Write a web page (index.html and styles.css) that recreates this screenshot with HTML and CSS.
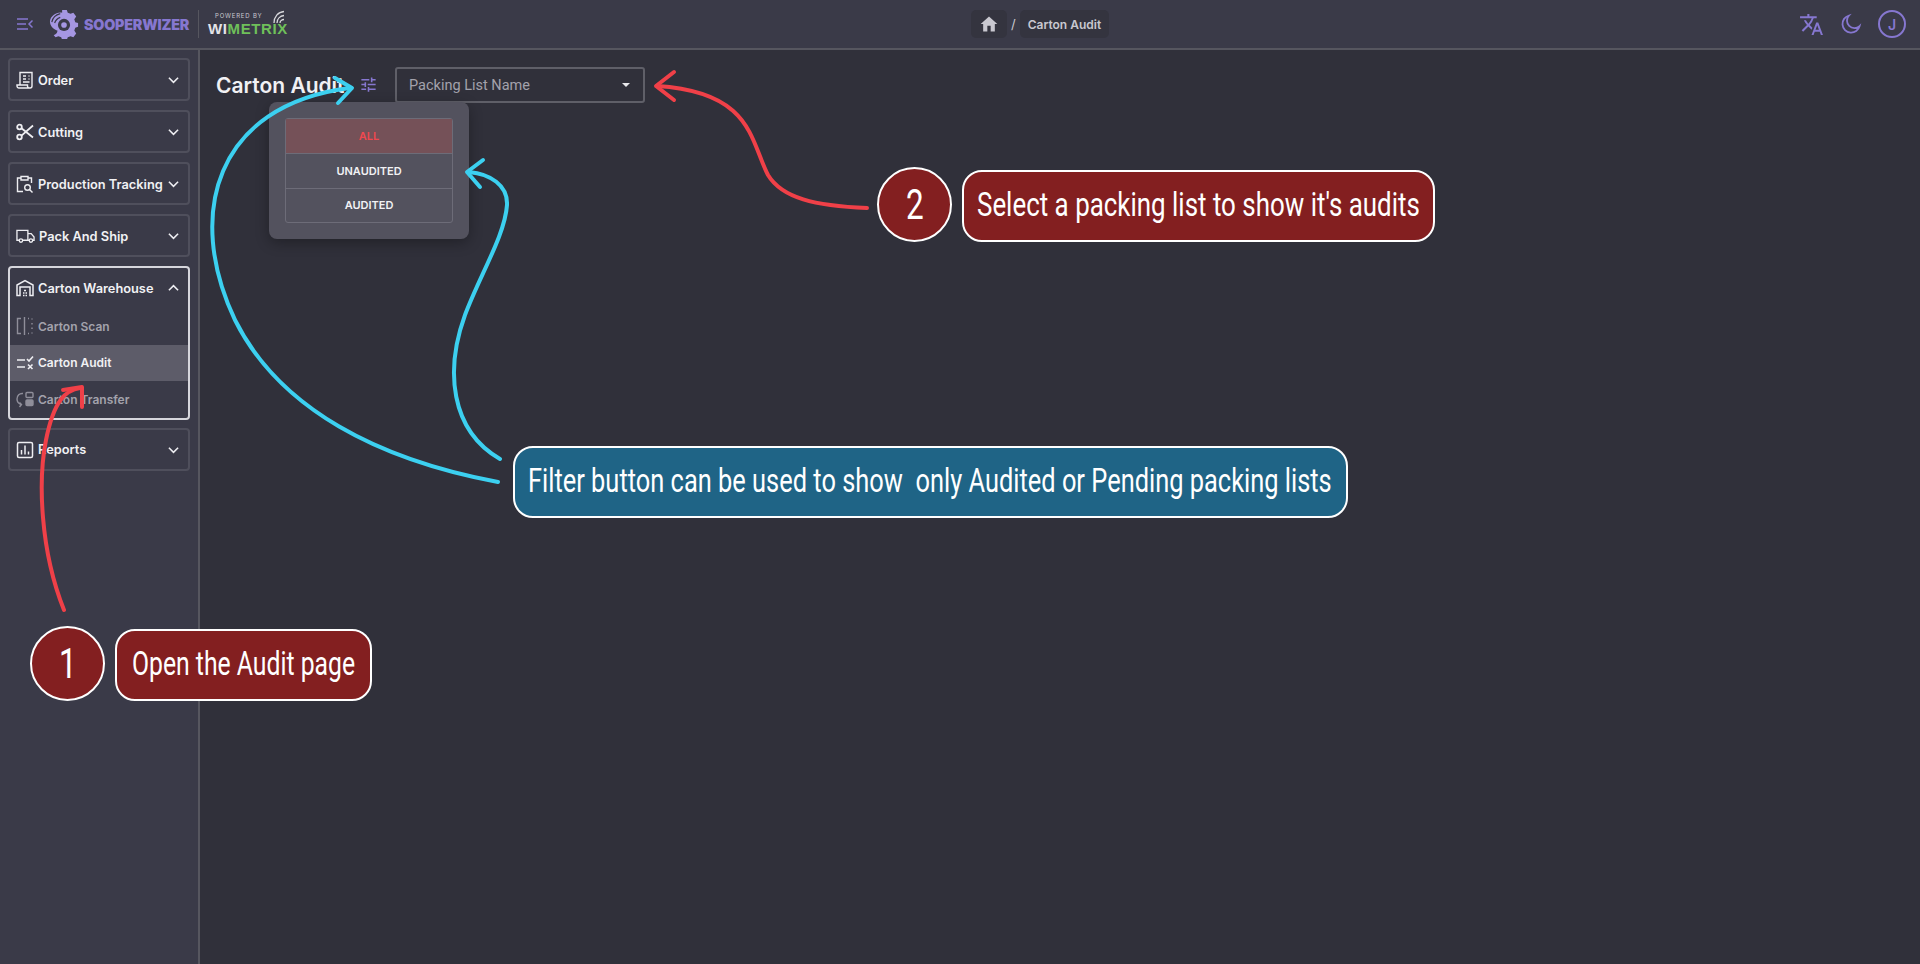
FILE: index.html
```html
<!DOCTYPE html>
<html>
<head>
  <meta charset="UTF-8">
  <title>Carton Audit</title>
  <link rel="stylesheet" href="styles.css">
</head>
<body>
  <header class="topbar">
    <div class="brand">
      <svg class="menu-icon" viewBox="0 0 16 12" width="16" height="12" fill="none" stroke="#8677d0" stroke-width="1.5">
        <path d="M0 1h11M0 6h9M0 11h11M15.5 2.5 12 6l3.5 3.5"/>
      </svg>
      <svg class="logo" viewBox="0 0 32 32" width="30" height="30">
        <path fill="#a596e2" d="M14 1h5l1 3 3 1 3-1 3 4-2 3 1 3 3 1v4l-3 1-1 3 2 3-3 4-3-1-3 1-1 3h-5l-1-3-3-1-3 1-2-2c3-1 4-3 4-5-3-1-8-4-8-10C2 7 8 3 14 4z"/>
        <circle cx="16" cy="17" r="6.5" fill="#3a3a48"/>
        <circle cx="16" cy="17" r="3" fill="#a596e2"/>
        <path d="M3 14C4 9 8 6 12 5M6 15c1-3 3-5 6-6" fill="none" stroke="#3a3a48" stroke-width="1.3"/>
      </svg>
      <span class="brand-name">SOOPERWIZER</span>
      <span class="brand-sep"></span>
      <div class="powered">
        <span class="powered-by">POWERED BY</span>
        <span class="wimetrix"><span class="wi">WI</span><span class="metrix">METRIX</span></span>
        <svg class="wifi" viewBox="0 0 14 14" width="14" height="14" fill="none" stroke="#d8d8dc" stroke-width="1.300"><path d="M2 13C2 7 6 2 12 1.500M5 13c0-4 3-7 7-7.500M8 13c0-2 2-3.500 4-3.500"/></svg>
      </div>
    </div>
    <nav class="crumbs">
      <span class="crumb">
        <svg viewBox="0 0 24 24" width="20" height="20" fill="#c9c8d0"><path d="M10 21v-7h4v7h5v-9h3L12 3 2 12h3v9z"/></svg>
      </span>
      <span class="crumb-sep">/</span>
      <span class="crumb">Carton Audit</span>
    </nav>
    <div class="top-actions">
      <svg viewBox="0 0 24 24" width="25" height="25" fill="#8677d0"><path d="m12.87 15.07-2.54-2.51.03-.03A17.5 17.5 0 0 0 14.07 6H17V4h-7V2H8v2H1v2h11.17a15.7 15.7 0 0 1-3.17 5.35A15.6 15.6 0 0 1 6.69 8h-2c.73 1.63 1.73 3.17 2.98 4.56l-5.09 5.02L4 19l5-5 3.11 3.11zM18.5 10h-2L12 22h2l1.12-3h4.75L21 22h2zm-2.62 7 1.62-4.33L19.12 17z"/></svg>
      <svg viewBox="0 0 24 24" width="24" height="24" fill="none" stroke="#8677d0" stroke-width="1.8"><path d="M10 3.5a8.7 8.7 0 1 0 10.6 10.6A7.5 7.5 0 0 1 10 3.5z"/></svg>
      <span class="avatar">J</span>
    </div>
  </header>

  <div class="layout">
    <aside class="sidebar">
      <div class="group">
        <div class="group-head">
          <svg class="nav-icon" viewBox="0 0 18 18" fill="none" stroke="#eeeef2" stroke-width="1.4"><path d="M4 14V1.5h12V15a2 2 0 0 1-2 2H3a2 2 0 0 1-2-2v-1h10.500v1a2 2 0 0 0 2 2M7 5h3M7 8h3M12.500 5h1M12.500 8h1M7 11h6.500"/></svg>
          <span>Order</span>
          <svg class="chev" viewBox="0 0 12 8"><path d="M1 1.500 6 6.500l5-5"/></svg>
        </div>
      </div>
      <div class="group">
        <div class="group-head">
          <svg class="nav-icon" viewBox="0 0 18 18" fill="none" stroke="#eeeef2" stroke-width="1.8"><circle cx="3.500" cy="4" r="2.300"/><circle cx="3.500" cy="14" r="2.300"/><path d="M5.500 5.300 17 14.500M5.500 12.700 17 2.500"/></svg>
          <span>Cutting</span>
          <svg class="chev" viewBox="0 0 12 8"><path d="M1 1.500 6 6.500l5-5"/></svg>
        </div>
      </div>
      <div class="group">
        <div class="group-head">
          <svg class="nav-icon" viewBox="0 0 18 18" fill="none" stroke="#eeeef2" stroke-width="1.4"><path d="M5 3H1.500v13.500H7M12 3h3.500v5M5 1.500h7V5H5z"/><circle cx="11.500" cy="12.500" r="2.800"/><path d="m13.500 14.500 3 3"/></svg>
          <span>Production Tracking</span>
          <svg class="chev" viewBox="0 0 12 8"><path d="M1 1.500 6 6.500l5-5"/></svg>
        </div>
      </div>
      <div class="group">
        <div class="group-head">
          <svg class="nav-icon wide" viewBox="0 0 20 16" fill="none" stroke="#eeeef2" stroke-width="1.4"><path d="M3.500 12.500H1V2h11.500v10.500H7M12.500 5.500h3.500l3 3.500v3.500h-1.500M12.500 12.500H14"/><circle cx="5.200" cy="12.800" r="1.800"/><circle cx="15.700" cy="12.800" r="1.800"/></svg>
          <span>Pack And Ship</span>
          <svg class="chev" viewBox="0 0 12 8"><path d="M1 1.500 6 6.500l5-5"/></svg>
        </div>
      </div>
      <div class="group open">
        <div class="group-head">
          <svg class="nav-icon" viewBox="0 0 18 18" fill="none" stroke="#eeeef2" stroke-width="1.5"><path d="M1 16.500V6l8-4.500L17 6v10.500h-3V8H4v8.500zM7 14h1.500M9.500 14H11M8 11.500h2M7 16.500h1.500M9.500 16.500H11"/></svg>
          <span>Carton Warehouse</span>
          <svg class="chev" viewBox="0 0 12 8"><path d="M1 6.500 6 1.500l5 5"/></svg>
        </div>
        <div class="sub-item">
          <svg class="nav-icon" viewBox="0 0 18 18" fill="none" stroke="#8f8e9a" stroke-width="1.400"><path d="M5 1.500H1.500v15H5M8.500 0v18M12 1.500h1M12 16.500h1M16 1.500v1M16 6v1.500M16 10.500V12M16 15.500v1"/></svg>
          <span>Carton Scan</span>
        </div>
        <div class="sub-item active">
          <svg class="nav-icon" viewBox="0 0 18 18" fill="none" stroke="#eeeef2" stroke-width="1.600"><path d="M1 6h8M1 13h8M11 5l2 2 4-4.500M12 10.500l4.500 4.500M16.500 10.500 12 15"/></svg>
          <span>Carton Audit</span>
        </div>
        <div class="sub-item">
          <svg class="nav-icon" viewBox="0 0 18 18" fill="none" stroke="#8f8e9a" stroke-width="1.400"><path d="M7 3.500C3.500 3 1 5.500 1 9c0 2.500 1.500 4.500 4 5.500M3.500 12.500l2 2-2 2.500"/><rect x="10" y="2.500" width="7" height="5" rx="1"/><rect x="10" y="10" width="7" height="5.500" rx="1" fill="#8f8e9a"/></svg>
          <span>Carton Transfer</span>
        </div>
      </div>
      <div class="group">
        <div class="group-head">
          <svg class="nav-icon" viewBox="0 0 18 18" fill="none" stroke="#eeeef2" stroke-width="1.500"><rect x="1.500" y="1.500" width="15" height="15" rx="1.500"/><path d="M5.500 13.500V9M9 13.500v-9M12.500 13.500v-3"/></svg>
          <span>Reports</span>
          <svg class="chev" viewBox="0 0 12 8"><path d="M1 1.500 6 6.500l5-5"/></svg>
        </div>
      </div>
    </aside>

    <main class="content">
      <div class="toolbar">
        <h1>Carton Audit</h1>
        <button class="filter-btn" type="button">
          <svg viewBox="0 0 24 24" width="19" height="19" fill="#8677d0"><path d="M3 17v2h6v-2zM3 5v2h10V5zm10 16v-2h8v-2h-8v-2h-2v6zM7 9v2H3v2h4v2h2V9zm14 4v-2H11v2zm-6-4h2V7h4V5h-4V3h-2z"/></svg>
        </button>
        <div class="select">
          <span>Packing List Name</span>
          <i class="caret"></i>
        </div>
      </div>
      <div class="popover">
        <ul class="filter-list">
          <li class="current">ALL</li>
          <li>UNAUDITED</li>
          <li>AUDITED</li>
        </ul>
      </div>
    </main>
  </div>

  <!-- annotations drawn on top of the screenshot -->
  <svg class="arrows" viewBox="0 0 1920 964" width="1920" height="964" fill="none" stroke-linecap="round" stroke-linejoin="round" stroke-width="4">
    <g stroke="#f04048">
      <path d="M64 610C40 550 38 480 46 440 54 400 66 390 80 388"/>
      <path d="M63 390 82 387 82 407"/>
      <path d="M867 208C815 206 782 198 768 175 750 140 752 92 657 86"/>
      <path d="M674 72 656 86 674 100"/>
    </g>
    <g stroke="#3cd0f0">
      <path d="M498 482C380 460 280 410 235 320 185 215 215 105 350 88"/>
      <path d="M335 78 352 88 338 103"/>
      <path d="M500 459C450 430 445 370 465 315 480 275 505 235 507 205 508 185 490 174 469 172"/>
      <path d="M483 160 467 172 480 187"/>
    </g>
  </svg>

  <div class="badge step-one"><span class="digit">1</span></div>
  <div class="note step-one-note"><span class="note-text narrow-a">Open the Audit page</span></div>
  <div class="badge step-two"><span class="digit">2</span></div>
  <div class="note step-two-note"><span class="note-text narrow-c">Select a packing list to show it's audits</span></div>
  <div class="note blue filter-note"><span class="note-text narrow-b">Filter button can be used to show&nbsp; only Audited or Pending packing lists</span></div>
</body>
</html>
```

FILE: styles.css
```css
:root {
  --panel: #3a3a48;
  --main: #30303a;
  --line: #56565f;
  --purple: #8677d0;
  --text: #f1f1f4;
  --muted: #a3a2ac;
}

* {
  box-sizing: border-box;
}

html, body {
  height: 100%;
}

body {
  margin: 0;
  display: flex;
  flex-direction: column;
  position: relative;
  overflow: hidden;
  background: var(--main);
  color: var(--text);
  font-family: Inter, "Liberation Sans", sans-serif;
}

.topbar {
  height: 50px;
  flex: none;
  display: grid;
  grid-template-columns: 954px auto 1fr;
  align-items: center;
  padding: 0 14px 0 17px;
  background: var(--panel);
  border-bottom: 2px solid var(--line);
}

.brand {
  display: flex;
  align-items: center;
}

.menu-icon {
  margin-right: 16px;
}

.brand-name {
  margin-left: 5px;
  color: var(--purple);
  font-weight: 900;
  font-size: 14.3px;
  letter-spacing: -0.2px;
}

.brand-sep {
  width: 1px;
  height: 28px;
  margin: 0 9px 0 9px;
  background: var(--line);
}

.powered {
  position: relative;
  display: flex;
  flex-direction: column;
  line-height: 1;
}

.powered-by {
  margin-left: 7px;
  font-size: 6px;
  letter-spacing: 0.8px;
  color: #c9c8d0;
}

.wimetrix {
  margin-top: 2px;
  font-size: 15px;
  font-weight: 700;
  letter-spacing: 0.6px;
  font-family: "Liberation Sans", sans-serif;
}

.wifi {
  position: absolute;
  right: 2px;
  top: -3px;
}

.wi {
  color: #e4e4e8;
}

.metrix {
  color: #6fc05a;
}

.crumbs {
  display: flex;
  align-items: center;
  gap: 4px;
}

.crumb {
  display: flex;
  align-items: center;
  height: 28px;
  padding: 0 8px;
  border-radius: 5px;
  background: #34343f;
  color: #c9c8d0;
  font-size: 12px;
  font-weight: 600;
}

.crumb-sep {
  color: #c9c8d0;
  font-size: 13px;
}

.top-actions {
  display: flex;
  align-items: center;
  justify-content: flex-end;
  gap: 15px;
}

.avatar {
  width: 28px;
  height: 28px;
  display: flex;
  align-items: center;
  justify-content: center;
  border: 2px solid var(--purple);
  border-radius: 50%;
  color: var(--purple);
  font-size: 14px;
  font-weight: 600;
}

.layout {
  flex: 1;
  display: flex;
  min-height: 0;
}

.sidebar {
  width: 200px;
  flex: none;
  display: flex;
  flex-direction: column;
  gap: 9px;
  padding: 8px 8px 0;
  background: var(--panel);
  border-right: 2px solid var(--line);
}

.group {
  border: 2px solid #4f4f5c;
  border-radius: 4px;
}

.group.open {
  border-color: #d6d6dc;
  margin-bottom: -1px;
}

.group.open .group-head {
  height: 40px;
  padding-top: 0;
}

.group-head {
  height: 39px;
  display: flex;
  align-items: center;
  gap: 4px;
  padding: 1px 6px 0;
  font-size: 12.8px;
  font-weight: 600;
  white-space: nowrap;
}

.group-head span {
  flex: 1;
}

.nav-icon {
  width: 18px;
  height: 18px;
  flex: none;
}

.nav-icon.wide {
  width: 19px;
}

.chev {
  width: 11px;
  height: 8px;
  margin-right: 3px;
  flex: none;
  fill: none;
  stroke: #eeeef2;
  stroke-width: 1.7;
}

.sub-item {
  height: 36.500px;
  display: flex;
  align-items: center;
  gap: 4px;
  padding: 0 6px;
  color: var(--muted);
  font-size: 12px;
  font-weight: 600;
}

.sub-item.active {
  background: #5d5c69;
  color: var(--text);
}

.content {
  flex: 1;
  position: relative;
  padding: 17px 16px;
}

.toolbar {
  display: flex;
  align-items: center;
  height: 35px;
}

h1 {
  width: 141px;
  margin: 2px 0 0;
  font-size: 21px;
  font-weight: 600;
  white-space: nowrap;
}

.filter-btn {
  width: 22px;
  height: 22px;
  padding: 0;
  display: flex;
  align-items: center;
  justify-content: center;
  border: 0;
  background: none;
}

.select {
  width: 250px;
  height: 36px;
  margin-left: 16px;
  padding: 1px 13px 0 12px;
  display: flex;
  align-items: center;
  justify-content: space-between;
  border: 2px solid #5f5f68;
  border-radius: 3px;
  color: var(--muted);
  font-family: Roboto, sans-serif;
  font-size: 14.5px;
}

.caret {
  width: 0;
  height: 0;
  border-left: 4.500px solid transparent;
  border-right: 4.500px solid transparent;
  border-top: 4.500px solid #e8e8ec;
}

.popover {
  position: absolute;
  left: 69px;
  top: 52px;
  width: 200px;
  padding: 16px;
  border-radius: 8px;
  background: #53525e;
  box-shadow: 0 4px 14px rgba(0, 0, 0, 0.3);
}

.filter-list {
  margin: 0;
  padding: 0;
  list-style: none;
  border: 1px solid #6d6c78;
  border-radius: 3px;
}

.filter-list li {
  height: 34.300px;
  display: flex;
  align-items: center;
  justify-content: center;
  font-size: 11px;
  font-weight: 600;
  border-top: 1px solid #6d6c78;
}

.filter-list li:first-child {
  border-top: 0;
}

.filter-list .current {
  background: #755158;
  color: #f0484f;
}

/* annotations */
.arrows {
  position: absolute;
  left: 0;
  top: 0;
  pointer-events: none;
}

.badge,
.note {
  position: absolute;
  display: flex;
  align-items: center;
  border: 2px solid #fff;
  background: #831f20;
  color: #fff;
  font-family: Roboto, sans-serif;
  white-space: nowrap;
}

.badge {
  width: 75px;
  height: 75px;
  justify-content: center;
  border-radius: 50%;
  font-size: 42px;
}

.digit {
  display: inline-block;
  transform: scaleX(0.75);
}

.note {
  height: 72px;
  border-radius: 20px;
  font-size: 33px;
}

.note-text {
  display: inline-block;
  margin-top: -3px;
  transform-origin: left center;
}

.narrow-a { transform: scaleX(0.75); }
.narrow-b { transform: scaleX(0.77); }
.narrow-c { transform: scaleX(0.785); }

.note.blue {
  background: #1f6486;
}

.step-one {
  left: 30px;
  top: 626px;
}

.step-two {
  left: 877px;
  top: 167px;
}

.step-one-note {
  left: 115px;
  top: 629px;
  width: 257px;
  padding-left: 15px;
}

.step-two-note {
  left: 962px;
  top: 170px;
  width: 473px;
  padding-left: 13px;
}

.filter-note {
  left: 513px;
  top: 446px;
  width: 835px;
  padding-left: 13px;
}
```
